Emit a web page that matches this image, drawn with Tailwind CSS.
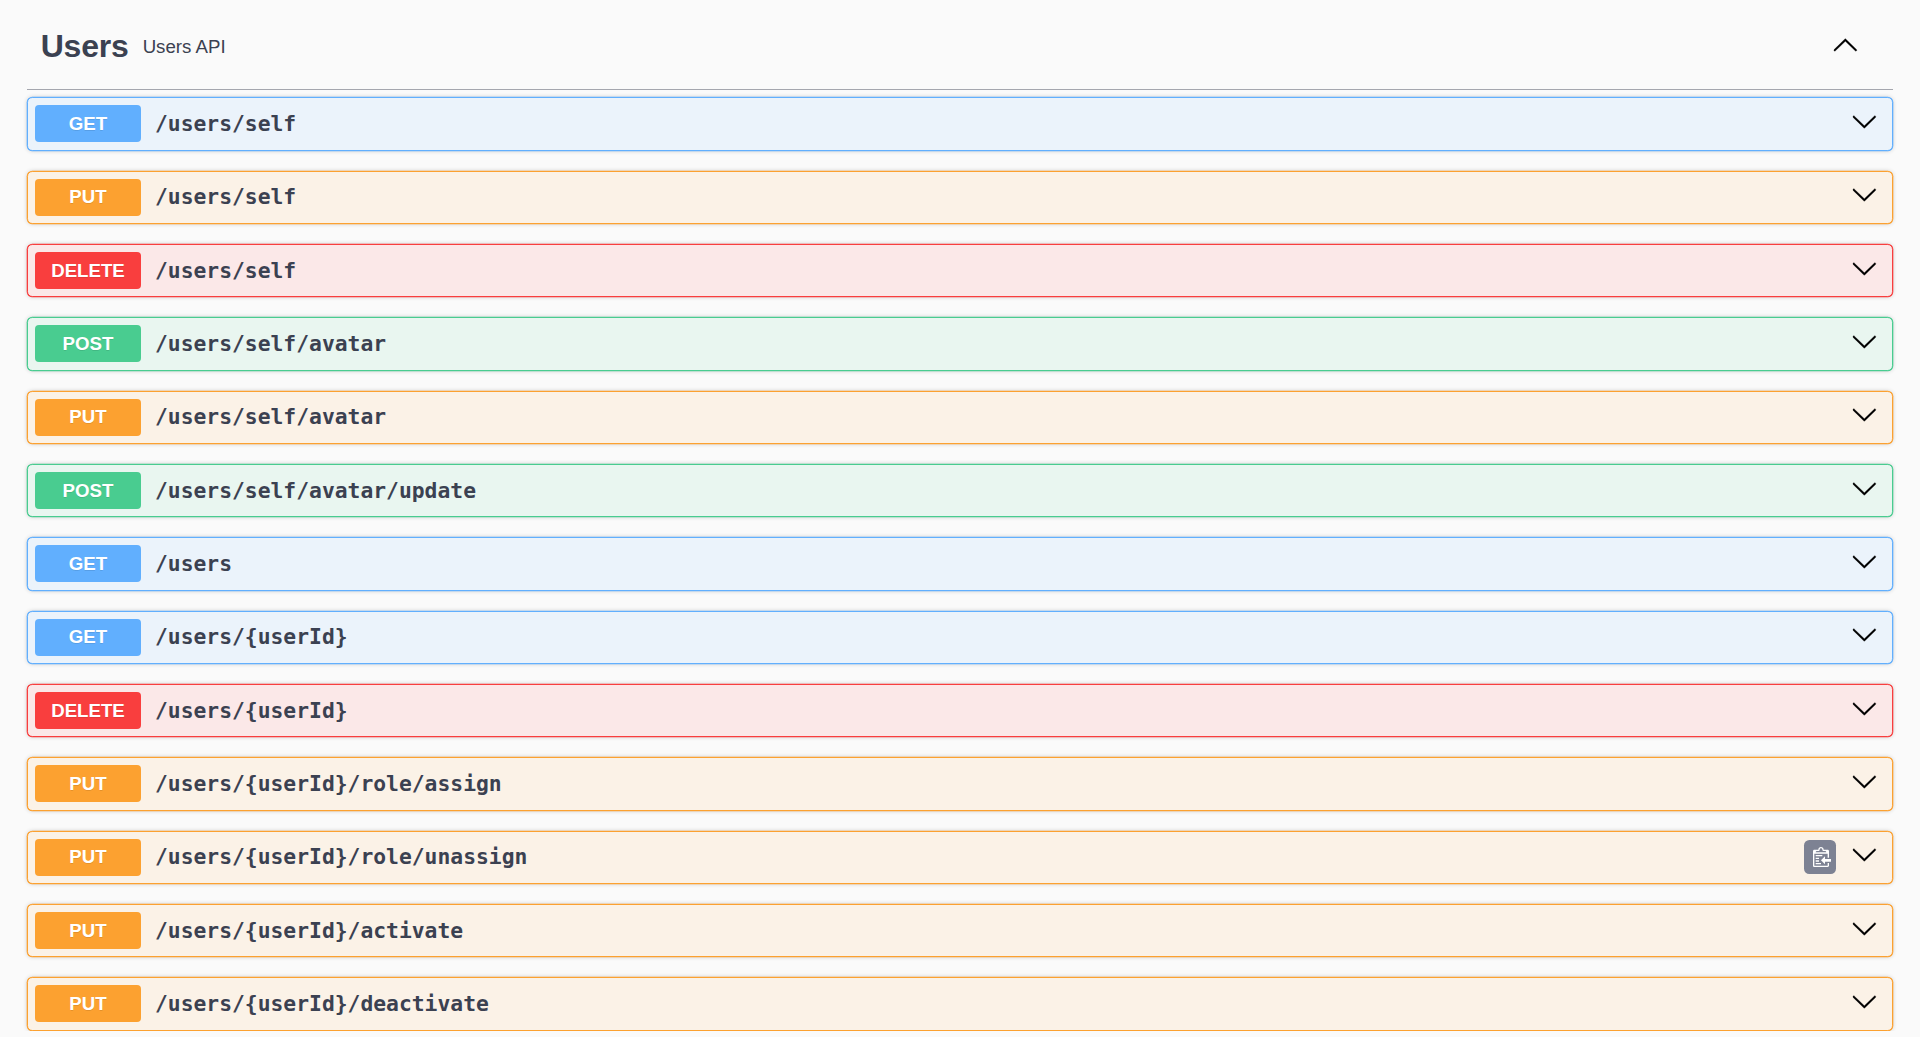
<!DOCTYPE html>
<html lang="en">
<head>
    <meta charset="UTF-8">
    <meta name="viewport" content="width=device-width, initial-scale=1.0">
    <title>Users API</title>
    <script src="https://cdn.jsdelivr.net/npm/@tailwindcss/browser@4"></script>
</head>
<body class="bg-[#fafafa] text-[#3b4151] font-['Liberation_Sans',sans-serif] overflow-hidden">
    <svg class="hidden" xmlns="http://www.w3.org/2000/svg">
        <symbol id="arrow-down" viewBox="0 0 20 20">
            <path d="M17.418 6.109c.272-.268.709-.268.979 0s.271.701 0 .969l-7.908 7.83c-.27.268-.707.268-.979 0l-7.908-7.83c-.27-.268-.27-.701 0-.969.271-.268.709-.268.979 0L10 13.25l7.418-7.141z" />
        </symbol>
        <symbol id="arrow-up" viewBox="0 0 20 20">
            <path d="M17.418 14.908c.272.27.709.27.979 0s.271-.701 0-.969l-7.908-7.83c-.27-.268-.707-.268-.979 0l-7.908 7.83c-.27.268-.27.701 0 .969.271.268.709.268.979 0L10 7.767l7.418 7.141z" />
        </symbol>
    </svg>

    <section class="px-[26.67px]">
        <h3 class="flex items-center h-[90px] pl-[14px] pr-[34.67px] border-b border-[#3b4151]/45">
            <span class="pt-[3px] text-[32px] leading-none font-bold tracking-[-0.2px]">Users</span>
            <small class="flex-1 pt-[5px] pl-[14px] text-[18.67px] leading-none">Users API</small>
            <button><svg class="block size-[26.67px] stroke-black stroke-[0.2]"><use href="#arrow-up" /></svg></button>
        </h3>
        <div id="operations" class="flex flex-col gap-5 pt-[7.33px]"></div>
    </section>

    <script>
        const operations = [
            { method: "GET", path: "/users/self" },
            { method: "PUT", path: "/users/self" },
            { method: "DELETE", path: "/users/self" },
            { method: "POST", path: "/users/self/avatar" },
            { method: "PUT", path: "/users/self/avatar" },
            { method: "POST", path: "/users/self/avatar/update" },
            { method: "GET", path: "/users" },
            { method: "GET", path: "/users/{userId}" },
            { method: "DELETE", path: "/users/{userId}" },
            { method: "PUT", path: "/users/{userId}/role/assign" },
            { method: "PUT", path: "/users/{userId}/role/unassign", copy: true },
            { method: "PUT", path: "/users/{userId}/activate" },
            { method: "PUT", path: "/users/{userId}/deactivate" }
        ];

        const styles = {
            GET: { row: "border-[#61affe] ring-[#61affe] bg-[#ebf3fb]", badge: "bg-[#61affe]" },
            PUT: { row: "border-[#fca130] ring-[#fca130] bg-[#fbf2e7]", badge: "bg-[#fca130]" },
            DELETE: { row: "border-[#f93e3e] ring-[#f93e3e] bg-[#fbe8e8]", badge: "bg-[#f93e3e]" },
            POST: { row: "border-[#49cc90] ring-[#49cc90] bg-[#e9f6f0]", badge: "bg-[#49cc90]" }
        };

        const copyButton = `
            <button class="flex items-center justify-center w-8 h-[34px] mr-[14.67px] rounded-[5.33px] bg-[#7d8293]">
                <svg class="w-[18.67px] h-5 ml-[3px]" viewBox="0 1 14 15" fill="#fff">
                    <path fill-rule="evenodd" d="M2 13h4v1H2v-1zm5-6H2v1h5V7zm2 3V8l-3 3 3 3v-2h5v-2H9zM4.5 9H2v1h2.5V9zM2 12h2.5v-1H2v1zm9 1h1v2c-.02.28-.11.52-.3.7-.19.18-.42.28-.7.3H1c-.55 0-1-.45-1-1V4c0-.55.45-1 1-1h3c0-1.11.89-2 2-2 1.11 0 2 .89 2 2h3c.55 0 1 .45 1 1v5h-1V6H1v9h10v-2zM2 5h8c0-.55-.45-1-1-1H8c-.55 0-1-.45-1-1s-.45-1-1-1-1 .45-1 1-.45 1-1 1H3c-.55 0-1 .45-1 1z" />
                </svg>
            </button>`;

        document.getElementById("operations").innerHTML = operations.map(op => `
            <div class="flex items-center h-[53.333px] pl-[7px] pr-[14.67px] border rounded-[5.33px] ring-[0.3px] shadow-[0_0_4px_rgba(0,0,0,0.19)] ${styles[op.method].row}">
                <span class="flex items-center justify-center w-[106.67px] h-[37px] pt-px rounded-[4px] text-white text-[18.67px] leading-none font-bold text-shadow-[0_1px_0_rgba(0,0,0,0.1)] ${styles[op.method].badge}">${op.method}</span>
                <span class="flex-1 pb-[0.4px] pl-[13.67px] font-['DejaVu_Sans_Mono',monospace] text-[21.33px] leading-none font-bold">${op.path}</span>
                ${op.copy ? copyButton : ""}
                <button class="pb-[5px]"><svg class="block size-[26.67px] stroke-black stroke-[0.2]"><use href="#arrow-down" /></svg></button>
            </div>`).join("");
    </script>
</body>
</html>
